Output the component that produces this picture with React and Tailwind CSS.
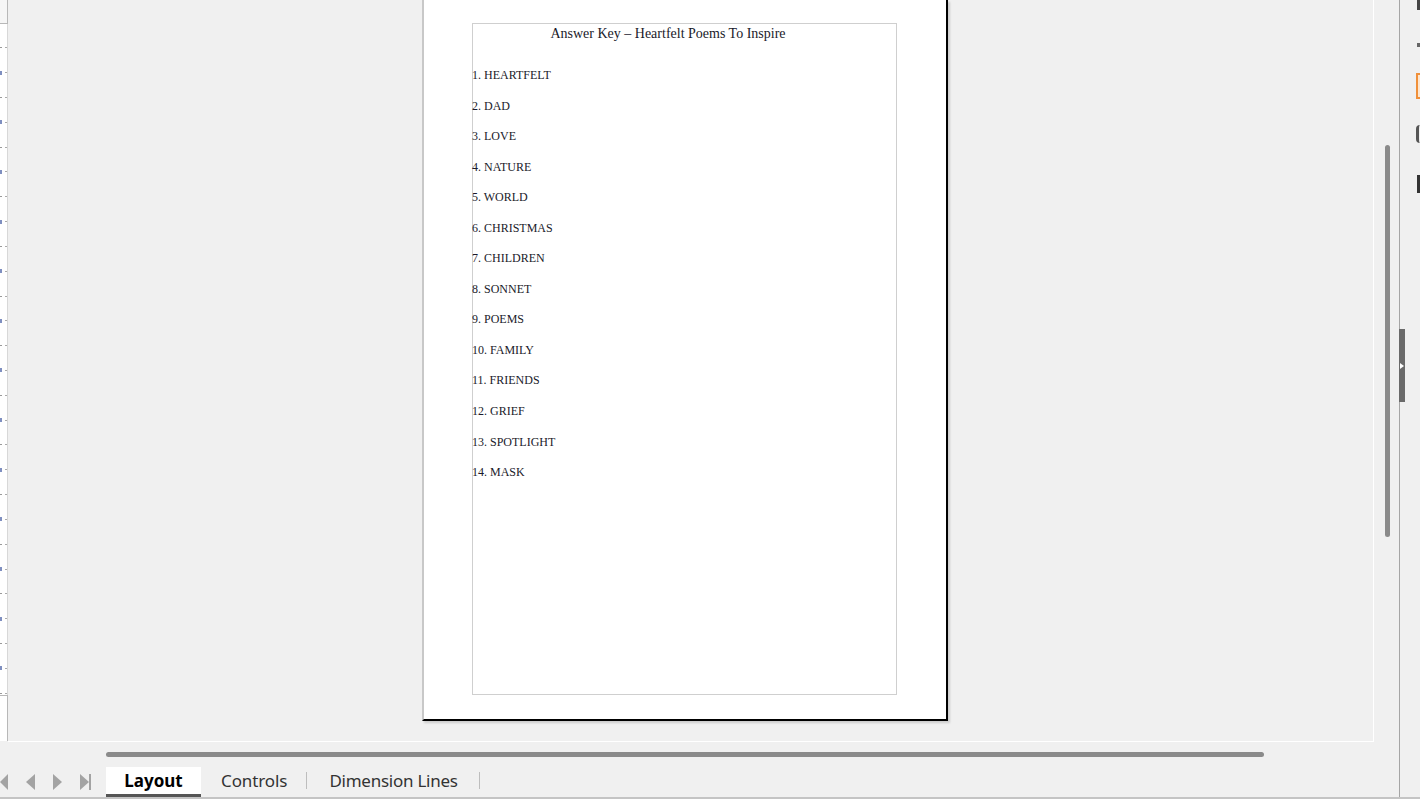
import React from 'react';

const words = [
  'HEARTFELT', 'DAD', 'LOVE', 'NATURE', 'WORLD', 'CHRISTMAS', 'CHILDREN',
  'SONNET', 'POEMS', 'FAMILY', 'FRIENDS', 'GRIEF', 'SPOTLIGHT', 'MASK',
];

function Ruler() {
  const ticks = Array.from({ length: 27 });
  return (
    <div className="w-[8px] flex flex-col shrink-0">
      <div className="h-[24px] border-r border-b border-[#b8b8b8] bg-[#f6f6f6]" />
      <div className="h-[671px] bg-white border-r border-[#d8d8d8] flex flex-col pt-[22px] gap-[21px] overflow-hidden">
        {ticks.map((_, i) => (
          <div key={i} className="flex items-center justify-between h-[4px]">
            <div className={i % 2 ? 'w-[2px] h-[4px] bg-[#7f8fc0]' : 'w-[2px] h-[1px] bg-[#999]'} />
            <div className="w-[2px] h-[1px] bg-[#aaa]" />
          </div>
        ))}
      </div>
      <div className="h-[46px] bg-white border-r border-t border-[#b8b8b8]" />
    </div>
  );
}

function Page() {
  return (
    <div className="ml-[414px] w-[526px] h-[721px] bg-white border-l-2 border-l-[#c8c8c8] border-r-2 border-r-black border-b-2 border-b-black pt-[23px] pl-[48px] shadow-[2px_2px_2px_rgba(0,0,0,0.15)]">
      <div
        className="w-[425px] h-[672px] border border-[#cfcfcf] text-[#1a1a2a]"
        style={{ fontFamily: '"Liberation Serif", "DejaVu Serif", serif' }}
      >
        <div className="text-center text-[14px] leading-[18px] pr-[33px] pt-[1px]">
          Answer Key – Heartfelt Poems To Inspire
        </div>
        <div className="flex flex-col mt-[25px] -ml-[1px]">
          {words.map((w, i) => (
            <div key={w} className="text-[12px] leading-[14px] h-[30.55px]">
              {i + 1}. {w}
            </div>
          ))}
        </div>
      </div>
    </div>
  );
}

function NavArrows() {
  return (
    <div className="w-[106px] flex items-center h-full">
      <svg width="106" height="22" viewBox="0 0 106 22">
        <polygon points="8,3 8,19 0,11" fill="#a3a3a3" />
        <polygon points="35,3 35,19 26,11" fill="#a3a3a3" />
        <polygon points="53,3 53,19 62,11" fill="#a3a3a3" />
        <polygon points="80,3 80,19 89,11" fill="#a3a3a3" />
        <rect x="89" y="3" width="2" height="16" fill="#a3a3a3" />
      </svg>
    </div>
  );
}

function Tabs() {
  return (
    <div
      className="h-[32px] flex items-end text-[17px]"
      style={{ fontFamily: '"Noto Sans", "Open Sans", sans-serif' }}
    >
      <div className="h-full flex items-center pt-[2px]">
        <NavArrows />
      </div>
      <div className="w-[95px] h-[30px] bg-white border-b-[3px] border-[#555] flex items-center justify-center font-bold text-black leading-none pb-[1px]">
        Layout
      </div>
      <div className="h-[30px] flex items-center text-[#333] leading-none pb-[3px]">
        <span className="ml-[20px] tracking-[-0.1px]">Controls</span>
        <span className="ml-[19px] w-px h-[17px] bg-[#bdbdbd]" />
        <span className="ml-[22px] tracking-[-0.25px]">Dimension Lines</span>
        <span className="ml-[21px] w-px h-[17px] bg-[#bdbdbd]" />
      </div>
    </div>
  );
}

function Sidebar() {
  return (
    <div className="w-[20px] relative flex flex-col items-end overflow-hidden">
      <div className="w-[3px] h-[10px] bg-[#444]" />
      <div className="mt-[33px] w-[3px] h-[4px] bg-[#666]" />
      <div className="mt-[26px] w-[4px] h-[26px] border-l-2 border-t-2 border-b-2 border-[#f0903a] bg-[#fde6cf]" />
      <div className="mt-[26px] w-[4px] h-[18px] border-l-[3px] border-[#555] rounded-l-full" />
      <div className="mt-[32px] w-[3px] h-[18px] bg-[#333]" />
    </div>
  );
}

export default function App() {
  return (
    <div className="w-[1420px] h-[799px] bg-[#f0f0f0] overflow-hidden flex flex-col">
      <div className="flex h-[797px]">
        <div className="flex flex-col w-[1399px]">
          <div className="flex h-[742px]">
            <Ruler />
            <div className="w-[1366px] h-[742px] border-r border-b border-white">
              <Page />
            </div>
            <div className="flex-1 flex justify-center pt-[145px] pl-[1px]">
              <div className="w-[5px] h-[392px] rounded-full bg-[#8a8a8a]" />
            </div>
          </div>
          <div className="h-[23px] pt-[10px] pl-[106px]">
            <div className="w-[1158px] h-[5px] rounded-full bg-[#8a8a8a]" />
          </div>
          <Tabs />
        </div>
        <div className="w-px bg-[#a5a5a5] relative">
          <div className="absolute top-[329px] left-0 w-[6px] h-[73px] bg-[#6a6a6a] flex items-center justify-center">
            <svg width="4" height="6" viewBox="0 0 4 6">
              <polygon points="0,0 4,3 0,6" fill="#fff" />
            </svg>
          </div>
        </div>
        <Sidebar />
      </div>
      <div className="h-[2px] bg-[#c4c4c4]" />
    </div>
  );
}
